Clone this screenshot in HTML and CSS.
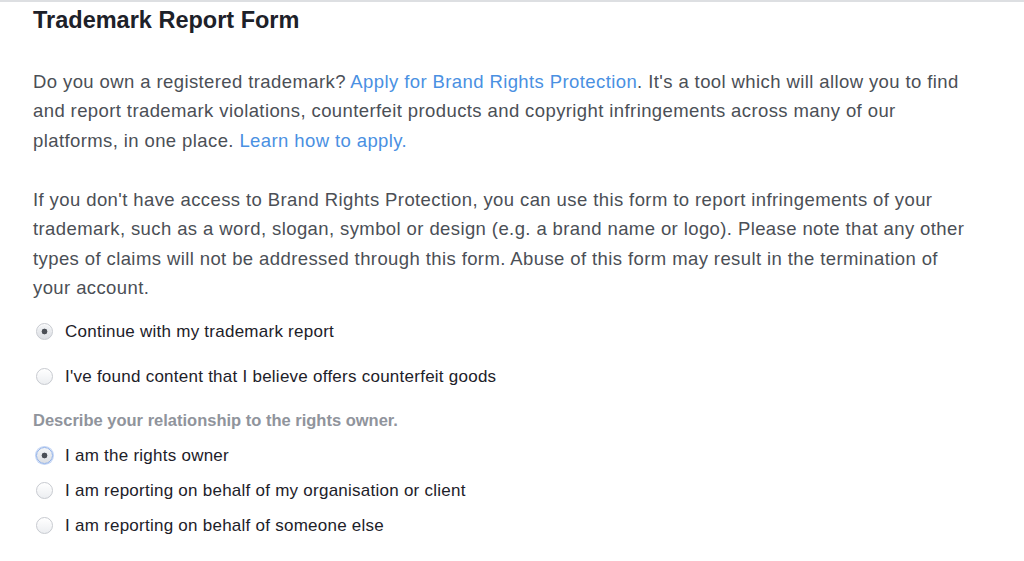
FILE: index.html
```html
<!DOCTYPE html>
<html lang="en">
<head>
<meta charset="utf-8">
<title>Trademark Report Form</title>
<link rel="stylesheet" href="styles.css">
</head>
<body>
<main class="page">
  <h1 class="title">Trademark Report Form</h1>
  <p class="text">Do you own a registered trademark? <a class="link" href="#">Apply for Brand Rights Protection</a>. It's a tool which will allow you to find and report trademark violations, counterfeit products and copyright infringements across many of our platforms, in one place. <a class="link" href="#">Learn how to apply.</a></p>
  <p class="text">If you don't have access to Brand Rights Protection, you can use this form to report infringements of your trademark, such as a word, slogan, symbol or design (e.g. a brand name or logo). Please note that any other types of claims will not be addressed through this form. Abuse of this form may result in the termination of your account.</p>

  <div class="group group-wide">
    <label class="option"><input class="radio" type="radio" name="kind" checked><span>Continue with my trademark report</span></label>
    <label class="option"><input class="radio" type="radio" name="kind"><span>I've found content that I believe offers counterfeit goods</span></label>
  </div>

  <div class="question">Describe your relationship to the rights owner.</div>
  <div class="group">
    <label class="option"><input class="radio focus" type="radio" name="rel" checked><span>I am the rights owner</span></label>
    <label class="option"><input class="radio" type="radio" name="rel"><span>I am reporting on behalf of my organisation or client</span></label>
    <label class="option"><input class="radio" type="radio" name="rel"><span>I am reporting on behalf of someone else</span></label>
  </div>
</main>
</body>
</html>
```

FILE: styles.css
```css
html, body {
  margin: 0;
  padding: 0;
  background: #fff;
}
body {
  font-family: "Liberation Sans", Arial, Helvetica, sans-serif;
  color: #4b4f56;
  border-top: 2px solid #dddfe2;
}
.page {
  width: 932px;
  padding: 0 0 0 33px;
}
.title {
  margin: 0;
  padding-top: 5px;
  font-size: 23.5px;
  line-height: 26px;
  font-weight: bold;
  color: #1d2129;
}
.text {
  margin: 34px 0 0;
  font-size: 18.5px;
  letter-spacing: 0.4px;
  line-height: 29.4px;
}
.text + .text {
  margin-top: 29.6px;
}
.link {
  color: #4a90e2;
  text-decoration: none;
}
.group {
  display: flex;
  flex-direction: column;
  gap: 16px;
  margin-top: 16px;
}
.group-wide {
  margin-top: 20px;
  gap: 26px;
}
.option {
  display: flex;
  align-items: center;
  gap: 12px;
  font-size: 17px;
  letter-spacing: 0.25px;
  line-height: 19px;
  color: #1d2129;
  margin-left: 3px;
}
.radio {
  -webkit-appearance: none;
  appearance: none;
  margin: 0;
  width: 17px;
  height: 17px;
  border-radius: 50%;
  border: 1px solid #c7cad0;
  background: linear-gradient(#ffffff, #eceef1);
  box-shadow: inset 0 1px 1px rgba(255,255,255,0.8);
  flex: none;
}
.radio:checked {
  background: radial-gradient(circle, #4b4f56 0, #4b4f56 2.6px, transparent 3.2px), linear-gradient(#f4f5f7, #dcdfe4);
}
.radio.focus {
  border-color: #8fb0e8;
  box-shadow: 0 0 0 1px rgba(120,160,230,0.45);
}
.question {
  margin-top: 25px;
  font-size: 16.5px;
  line-height: 19px;
  font-weight: bold;
  color: #90949c;
}
```
